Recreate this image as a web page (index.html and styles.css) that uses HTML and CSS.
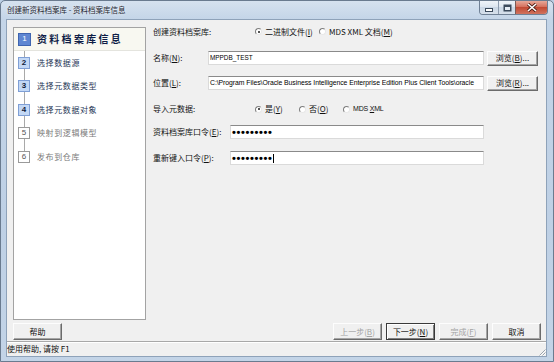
FILE: index.html
```html
<!DOCTYPE html>
<html lang="zh-CN">
<head>
<meta charset="utf-8">
<title>创建新资料档案库 - 资料档案库信息</title>
<link rel="stylesheet" href="styles.css">
</head>
<body>
<div class="window">
  <div class="titlebar">
    <span class="title">创建新资料档案库 - 资料档案库信息</span>
    <div class="caption">
      <div class="cbtn min"><svg width="8" height="4" viewBox="0 0 8 4"><rect x="0.5" y="0.5" width="7" height="3" fill="#fff" stroke="#3b4a5c"/></svg></div>
      <div class="cbtn max"><svg width="9" height="8" viewBox="0 0 9 8"><rect x="0.5" y="0.5" width="8" height="7" fill="#3b4a5c"/><rect x="2" y="3" width="5" height="3" fill="#e4ecf5"/></svg></div>
      <div class="cbtn close"><svg width="10" height="9" viewBox="0 0 10 9"><path d="M1 1 L9 8 M9 1 L1 8" stroke="#4a1c14" stroke-width="3.2"/><path d="M1 1 L9 8 M9 1 L1 8" stroke="#fff" stroke-width="1.6"/></svg></div>
    </div>
  </div>
  <div class="client">
    <div class="main">
      <div class="steps">
        <div class="step current"><span class="num">1</span><span class="stext">资料档案库信息</span></div>
        <div class="step done"><span class="num">2</span><span class="stext">选择数据源</span></div>
        <div class="step done"><span class="num">3</span><span class="stext">选择元数据类型</span></div>
        <div class="step done"><span class="num">4</span><span class="stext">选择元数据对象</span></div>
        <div class="step todo"><span class="num">5</span><span class="stext">映射到逻辑模型</span></div>
        <div class="step todo"><span class="num">6</span><span class="stext">发布到仓库</span></div>
      </div>
      <div class="form">
        <div class="row r1">
          <span class="lbl w102">创建资料档案库:</span>
          <span class="opt w64"><span class="radio on"></span><span>二进制文件(<u>I</u>)</span></span>
          <span class="opt"><span class="radio"></span><span>MDS XML 文档(<u>M</u>)</span></span>
        </div>
        <div class="row r2">
          <span class="lbl w55">名称(<u>N</u>):</span>
          <div class="field wide">MPPDB_TEST</div>
          <div class="btn browse">浏览(<u>B</u>)...</div>
        </div>
        <div class="row r3">
          <span class="lbl w55">位置(<u>L</u>):</span>
          <div class="field wide loc">C:\Program Files\Oracle Business Intelligence Enterprise Edition Plus Client Tools\oracle</div>
          <div class="btn browse">浏览(<u>R</u>)...</div>
        </div>
        <div class="row r4">
          <span class="lbl w102">导入元数据:</span>
          <span class="opt w44"><span class="radio on"></span><span>是(<u>Y</u>)</span></span>
          <span class="opt w44"><span class="radio"></span><span>否(<u>O</u>)</span></span>
          <span class="opt"><span class="radio"></span><span class="latin">MDS <u>X</u>ML</span></span>
        </div>
        <div class="row r5">
          <span class="lbl w77">资料档案库口令(<u>E</u>):</span>
          <div class="field pass"><span class="dots">•••••••••</span></div>
        </div>
        <div class="row r6">
          <span class="lbl w77">重新键入口令(<u>P</u>):</span>
          <div class="field pass"><span class="dots">•••••••••</span><span class="caret"></span></div>
        </div>
      </div>
    </div>
    <div class="buttons">
      <div class="btn help">帮助</div>
      <div class="navgroup">
        <div class="btn disabled">上一步(<u>B</u>)</div>
        <div class="btn default">下一步(<u>N</u>)</div>
        <div class="btn disabled">完成(<u>F</u>)</div>
        <div class="btn">取消</div>
      </div>
    </div>
    <div class="status">
      <span class="stat-text">使用帮助, 请按 F1</span>
      <svg class="grip" width="8" height="8" viewBox="0 0 8 8"><path d="M7.5 1.5 L1.5 7.5 M7.5 4.5 L4.5 7.5" stroke="#9aa3ad" stroke-width="1"/><path d="M8 2 L2 8 M8 5 L5 8" stroke="#fff" stroke-width="0.8"/></svg>
    </div>
  </div>
</div>
</body>
</html>
```

FILE: styles.css
```css
* { box-sizing: border-box; }
html, body { margin: 0; padding: 0; }
body {
  width: 554px;
  height: 362px;
  overflow: hidden;
  font-family: "Noto Sans CJK SC", "Liberation Sans", sans-serif;
  font-size: 8px;
  color: #000;
  background: #bccfe4;
}
u { text-decoration: underline; text-underline-offset: 1px; }

.window {
  width: 554px;
  height: 362px;
  display: flex;
  flex-direction: column;
  padding: 0 6px 4px 5px;
  border: 1px solid #6a7b8f;
  border-radius: 5px 5px 0 0;
  background: linear-gradient(to bottom, #d6e2ef 0, #c4d5e8 18px, #bed0e5 60%, #c3d4e7 100%);
}

.titlebar {
  height: 18px;
  display: flex;
  align-items: flex-start;
}
.title {
  padding: 4px 0 0 1px;
  font-size: 7.5px;
  line-height: 10px;
  color: #1d2530;
  text-shadow: 0 0 3px rgba(255,255,255,0.9);
}
.caption {
  margin-left: auto;
  margin-right: -1px;
  display: flex;
  height: 14px;
  border: 1px solid #6f8095;
  border-top: none;
  border-radius: 0 0 4px 4px;
  overflow: hidden;
}
.cbtn {
  height: 13px;
  display: flex;
  align-items: center;
  justify-content: center;
  background: linear-gradient(to bottom, #eef3f9 0, #dde6f0 45%, #cad7e6 50%, #d6e0eb 100%);
}
.cbtn.min { width: 19px; border-right: 1px solid #8c9bae; padding-top: 4px; }
.cbtn.max { width: 17px; border-right: 1px solid #7b5a55; }
.cbtn.close {
  width: 31px;
  background: linear-gradient(to bottom, #e7a899 0, #d5705d 45%, #c24a34 50%, #d0735f 100%);
}

.client {
  flex: 1;
  display: flex;
  flex-direction: column;
  padding-top: 4px;
  background: #f0f0f0;
  border: 1px solid #8ea2b9;
}

.main {
  height: 296px;
  display: flex;
  align-items: flex-start;
}

.steps {
  position: relative;
  margin: 3px 0 0 6px;
  width: 133px;
  height: 293px;
  border: 1px solid #a3a3a3;
  background: #fff;
}
.steps::before {
  content: "";
  position: absolute;
  left: 10px;
  top: 17px;
  width: 1px;
  height: 108px;
  background: #a9a9a9;
}
.step {
  position: relative;
  display: flex;
  align-items: center;
  height: 23.5px;
  padding-left: 4px;
}
.step.current {
  height: 23px;
  background: #f8f8f1;
  border-bottom: 1px solid #e4e4de;
}
.num {
  position: relative;
  width: 12px;
  height: 12px;
  display: flex;
  align-items: center;
  justify-content: center;
  font-family: "Liberation Sans", sans-serif;
  font-size: 8px;
  font-weight: bold;
  line-height: 10px;
}
.stext {
  margin-left: 7px;
  font-size: 8px;
  letter-spacing: 0.6px;
  line-height: 10px;
}
.current .num {
  width: 13px;
  height: 13px;
  background: #5f87d2;
  border: 1px solid #3f65b0;
  color: #fff;
  font-weight: normal;
}
.current .stext {
  margin-left: 6px;
  font-size: 10px;
  font-weight: bold;
  letter-spacing: 2.3px;
  color: #0f1d46;
}
.done .num {
  background: #c3d8f5;
  border: 1px solid #7f9fd6;
  color: #101c3a;
}
.done .stext { color: #263656; }
.todo .num {
  background: #fff;
  border: 1px solid #9a9a9a;
  color: #555;
  font-weight: normal;
}
.todo .stext { color: #7a7a7a; }

.form {
  flex: 1;
  margin: 0 8px 0 7px;
  display: flex;
  flex-direction: column;
}
.row {
  display: flex;
  align-items: center;
  height: 16px;
  line-height: 10px;
  white-space: nowrap;
}
.r1 { height: 15px; }
.r2 { margin-top: 11px; }
.r3 { margin-top: 9px; }
.r4 { margin-top: 10px; }
.r5 { margin-top: 7px; }
.r6 { margin-top: 10px; }

.lbl { flex: none; color: #111; }
.w102 { width: 102px; }
.w55 { width: 55px; }
.w77 { width: 77px; }

.opt { display: flex; align-items: center; flex: none; color: #111; }
.w64 { width: 64px; }
.w44 { width: 44px; }
.latin { font-family: "Liberation Sans", sans-serif; font-size: 7px; letter-spacing: -0.2px; }
.radio {
  position: relative;
  width: 7px;
  height: 7px;
  margin-right: 3px;
  border-radius: 50%;
  border: 1px solid;
  border-color: #7d7d7d #e8e8e8 #e8e8e8 #7d7d7d;
  background: #fff;
}
.radio.on::after {
  content: "";
  position: absolute;
  left: 1.5px;
  top: 1.5px;
  width: 2px;
  height: 2px;
  border-radius: 50%;
  background: #1a1a1a;
}

.field {
  height: 14px;
  border: 1px solid #dadada;
  border-top-color: #8a8a8a;
  background: #fff;
  padding-left: 1px;
  font-family: "Liberation Sans", sans-serif;
  font-size: 6.4px;
  line-height: 12px;
  overflow: hidden;
  white-space: nowrap;
  display: flex;
  align-items: center;
}
.wide { width: 276px; }
.loc { font-size: 6.85px; letter-spacing: -0.05px; }
.pass { width: 254px; }
.dots {
  font-size: 11px;
  font-weight: bold;
  letter-spacing: 0.65px;
  line-height: 12px;
}
.caret {
  width: 1px;
  height: 9px;
  background: #000;
  margin-left: 0;
}

.btn {
  height: 15px;
  display: flex;
  align-items: center;
  justify-content: center;
  background: #f0f0f0;
  border: 1px solid;
  border-color: #fdfdfd #6b6b6b #6b6b6b #fdfdfd;
  box-shadow: inset -1px -1px 0 #a5a5a5;
  color: #111;
  line-height: 10px;
  white-space: nowrap;
}
.browse { width: 51px; margin-left: 3px; flex: none; }

.buttons {
  height: 17px;
  margin: 3px 0 1px 0;
  display: flex;
}
.buttons .btn { height: 17px; width: 49px; }
.help { margin-left: 6px; }
.navgroup {
  margin-left: auto;
  margin-right: 5px;
  display: flex;
  gap: 4px;
}
.btn.disabled { color: #a3a3a3; }
.btn.default {
  border-color: #3a3a3a;
  box-shadow: inset 1px 1px 0 #fff, inset -1px -1px 0 #7e7e7e;
}

.status {
  height: 15px;
  border-top: 1px solid #a8a8a8;
  box-shadow: inset 0 1px 0 #fff;
  display: flex;
  align-items: flex-end;
  justify-content: space-between;
}
.stat-text {
  align-self: center;
  padding-left: 0;
  line-height: 12px;
  color: #111;
}
.grip { flex: none; }
```
